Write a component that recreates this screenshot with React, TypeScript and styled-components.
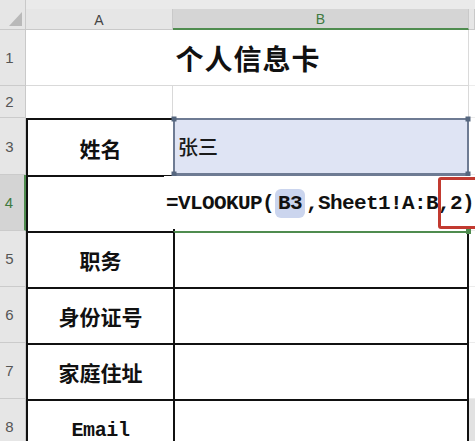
import React from 'react';
import styled, { createGlobalStyle } from 'styled-components';

const GlobalStyle = createGlobalStyle`
  html, body {
    margin: 0;
    padding: 0;
    background: #fff;
  }
`;

const cjk = `"Noto Sans CJK SC", "Noto Sans", sans-serif`;
const mono = `"Liberation Mono", "Courier New", monospace`;

const Sheet = styled.div`
  position: relative;
  width: 475px;
  height: 441px;
  overflow: hidden;
  background: #fff;
  display: grid;
  grid-template-columns: 26px 147px 296px 6px;
  grid-template-rows: 9px 21px 56px 32px 57px 56px 56px 56px 56px 56px;
  font-family: ${cjk};
`;

const Corner = styled.div`
  grid-row: 1 / 3;
  background: #e6e6e6;
  border-right: 1px solid #c9c9c9;
  border-bottom: 1px solid #c9c9c9;
  box-sizing: border-box;
  display: flex;
  align-items: flex-end;
  justify-content: flex-end;
  padding: 0 3px 3px 0;
`;

const TopStrip = styled.div`
  grid-column: 2 / -1;
  background: #eaeaea;
`;

const ColHeader = styled.div<{ $selected?: boolean }>`
  box-sizing: border-box;
  background: ${(p) => (p.$selected ? '#d5d5d5' : '#e6e6e6')};
  border-right: 1px solid #c9c9c9;
  border-bottom: ${(p) => (p.$selected ? '2px solid #4f8c4f' : '1px solid #c9c9c9')};
  color: ${(p) => (p.$selected ? '#3f7a3f' : '#444')};
  font-family: "Liberation Sans", Arial, sans-serif;
  font-size: 14px;
  display: flex;
  align-items: center;
  justify-content: center;
  padding-top: 1px;
`;

const RowHeader = styled.div<{ $selected?: boolean }>`
  box-sizing: border-box;
  background: ${(p) => (p.$selected ? '#d4d4d4' : '#e6e6e6')};
  border-bottom: 1px solid #cbcbcb;
  border-right: ${(p) => (p.$selected ? '2px solid #4f8c4f' : '1px solid #c9c9c9')};
  color: ${(p) => (p.$selected ? '#3f7a3f' : '#555')};
  font-family: "Liberation Sans", Arial, sans-serif;
  font-size: 15px;
  display: flex;
  align-items: center;
  justify-content: center;
  padding-right: 6px;
`;

const TitleCell = styled.div`
  grid-column: 2 / 4;
  box-sizing: border-box;
  border-bottom: 1px solid #d9d9d9;
  border-right: 1px solid #dadada;
  display: flex;
  align-items: center;
  justify-content: center;
  font-size: 28px;
  font-weight: 700;
  color: #111;
  letter-spacing: 1px;
  padding-left: 2px;
`;

const BlankCell = styled.div`
  box-sizing: border-box;
  border-right: 1px solid #d9d9d9;
`;

const LabelCell = styled.div<{ $latin?: boolean }>`
  box-sizing: border-box;
  border-top: 2px solid #111;
  border-left: 2px solid #111;
  display: flex;
  align-items: center;
  justify-content: center;
  font-family: ${(p) => (p.$latin ? mono : cjk)};
  font-size: ${(p) => (p.$latin ? '20px' : '21px')};
  letter-spacing: ${(p) => (p.$latin ? '-0.4px' : '0')};
  font-weight: 700;
  color: #111;
  padding-top: ${(p) => (p.$latin ? '4px' : '0')};
`;

const ValueCell = styled.div<{ $topColor?: string }>`
  box-sizing: border-box;
  border-top: 2px solid ${(p) => p.$topColor || '#111'};
  border-left: 2px solid #111;
  border-right: 2px solid #111;
`;

const SelectedCell = styled.div`
  box-sizing: border-box;
  background: #dfe4f4;
  border: 2px solid #6e7b93;
  display: flex;
  align-items: center;
  padding-left: 3px;
  font-size: 20px;
  font-weight: 500;
  color: #1a1a1a;
`;

const SpareCell = styled.div<{ $shade?: boolean }>`
  box-sizing: border-box;
  background: ${(p) => (p.$shade ? '#e2e2e2' : '#fff')};
  border-bottom: 1px solid #ececec;
`;

const Handle = styled.span`
  position: absolute;
  width: 5px;
  height: 5px;
  background: #56677f;
  transform: translate(-50%, -50%);
`;

const FillHandle = styled.span`
  position: absolute;
  left: 466px;
  top: 229px;
  width: 5px;
  height: 5px;
  background: #4f8c4f;
`;

const EditBox = styled.div`
  position: absolute;
  left: 164px;
  top: 176px;
  width: 320px;
  height: 53px;
  background: #fff;
  display: flex;
  align-items: center;
  padding: 2px 0 0 2px;
  box-sizing: border-box;
  font-family: ${mono};
  font-size: 21px;
  letter-spacing: -0.6px;
  font-weight: 700;
  color: #111;
  white-space: pre;
`;

const RefPill = styled.span`
  background: #cbd5ee;
  border-radius: 6px;
  padding: 3px 3px;
  margin: 0 1px;
`;

const RedMark = styled.div`
  position: absolute;
  left: 438px;
  top: 177px;
  width: 42px;
  height: 52px;
  box-sizing: border-box;
  border: 3px solid #c23a30;
  border-radius: 3px;
`;

const lowerRows = [
  { n: 5, label: '职务' },
  { n: 6, label: '身份证号' },
  { n: 7, label: '家庭住址' },
  { n: 8, label: 'Email', latin: true },
];

const App: React.FC = () => {
  return (
    <Sheet>
      <GlobalStyle />
      <Corner>
        <svg width="13" height="14" viewBox="0 0 13 14">
          <polygon points="13,0 13,14 0,14" fill="#b9b9b9" />
        </svg>
      </Corner>
      <TopStrip />
      <ColHeader>A</ColHeader>
      <ColHeader $selected>B</ColHeader>
      <ColHeader />

      <RowHeader>1</RowHeader>
      <TitleCell>个人信息卡</TitleCell>
      <SpareCell />

      <RowHeader>2</RowHeader>
      <BlankCell />
      <BlankCell />
      <SpareCell />

      <RowHeader>3</RowHeader>
      <LabelCell>姓名</LabelCell>
      <SelectedCell>张三</SelectedCell>
      <SpareCell />

      <RowHeader $selected>4</RowHeader>
      <LabelCell />
      <ValueCell $topColor="#6e7b93" />
      <SpareCell />

      {lowerRows.map((row) => (
        <React.Fragment key={row.n}>
          <RowHeader>{row.n}</RowHeader>
          <LabelCell $latin={row.latin}>{row.label}</LabelCell>
          <ValueCell $topColor={row.n === 5 ? '#4f8c4f' : undefined} />
          <SpareCell $shade={row.n === 8} />
        </React.Fragment>
      ))}

      <Handle style={{ left: 174, top: 119 }} />
      <Handle style={{ left: 468, top: 119 }} />
      <Handle style={{ left: 174, top: 174 }} />
      <Handle style={{ left: 468, top: 174 }} />

      <EditBox>
        =VLOOKUP(<RefPill>B3</RefPill>,Sheet1!A:B,2)
      </EditBox>
      <RedMark />
      <FillHandle />
    </Sheet>
  );
};

export default App;
